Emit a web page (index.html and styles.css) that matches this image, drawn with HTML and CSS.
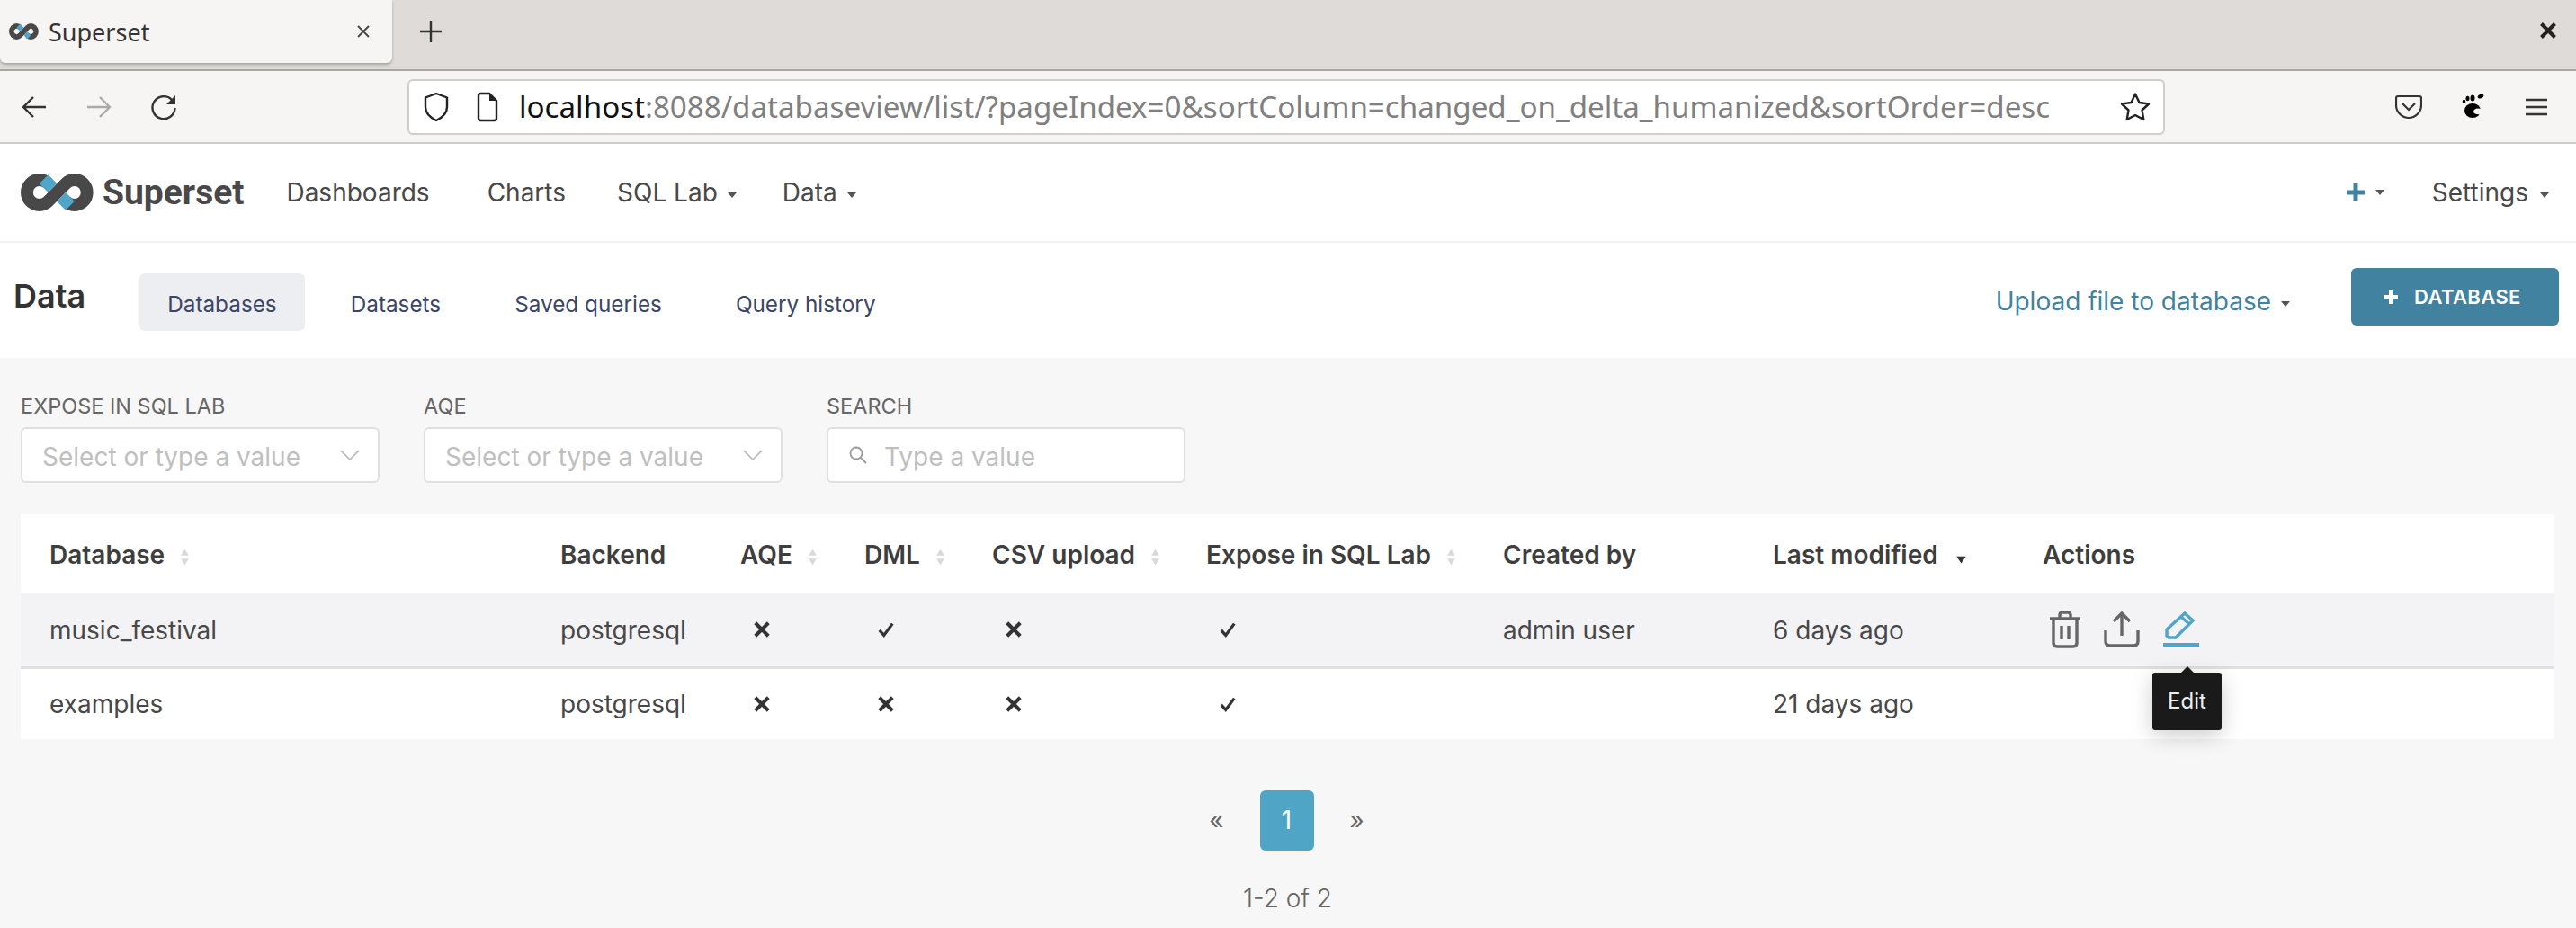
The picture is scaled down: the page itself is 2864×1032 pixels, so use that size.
FILE: index.html
```html
<!doctype html>
<html lang="en">
    <head>
        <meta charset="utf-8">
        <title>Superset</title>
        <link rel="stylesheet" href="styles.css">
    </head>
    <body>
        <svg class="defs" width="0" height="0">
            <symbol id="logo" viewBox="0 0 82 42" preserveAspectRatio="none">
                <path d="M30.900 11.100A14 14 0 1 0 30.900 30.900L50.700 11.100A14 14 0 1 1 50.700 30.900" fill="none" stroke="#484848" stroke-width="14"/>
                <path d="M26 6.200L35.850 16.050M45.750 25.950L55.600 35.800" fill="none" stroke="#4fa6c8" stroke-width="14"/>
            </symbol>
            <symbol id="yes" viewBox="0 0 22 22">
                <path d="M3 12L8.500 18L19 4" fill="none" stroke="#333" stroke-width="3.600"/>
            </symbol>
            <symbol id="no" viewBox="0 0 22 22">
                <path d="M3 3L19 19M19 3L3 19" fill="none" stroke="#333" stroke-width="4.400"/>
            </symbol>
            <symbol id="sort" viewBox="0 0 12 24">
                <path d="M6 2L11 10H1ZM6 22L1 14H11Z" fill="#d9d9d9"/>
            </symbol>
        </svg>

        <div class="tabbar">
            <div class="tab">
                <svg class="tab-logo"><use href="#logo"/></svg>
                <span class="tab-title">Superset</span>
                <svg class="tab-close" viewBox="0 0 16 16"><path d="M2 2L14 14M14 2L2 14" stroke="#444" stroke-width="1.8"/></svg>
            </div>
            <svg class="tab-new" viewBox="0 0 26 26"><path d="M13 1V25M1 13H25" stroke="#333" stroke-width="2.4"/></svg>
            <svg class="win-close" viewBox="0 0 16 16"><path d="M2 2L14 14M14 2L2 14" stroke="#222" stroke-width="3.2"/></svg>
        </div>

        <div class="toolbar">
            <svg class="tool-icon back" viewBox="0 0 30 30"><path d="M28 15H3M14 4L3 15L14 26" fill="none" stroke="#333" stroke-width="2.4"/></svg>
            <svg class="tool-icon forward" viewBox="0 0 30 30"><path d="M2 15H27M16 4L27 15L16 26" fill="none" stroke="#aaa" stroke-width="2.4"/></svg>
            <svg class="tool-icon reload" viewBox="0 0 30 30"><path d="M24 7A12.5 12.5 0 1 0 27.5 16" fill="none" stroke="#333" stroke-width="2.4"/><path d="M28 2V12H18Z" fill="#333"/></svg>
            <div class="urlbar">
                <svg class="shield" viewBox="0 0 30 34"><path d="M15 2L27 6.500V17C27 24 21 29 15 32C9 29 3 24 3 17V6.500Z" fill="none" stroke="#222" stroke-width="2.4" stroke-linejoin="round"/></svg>
                <svg class="doc" viewBox="0 0 26 34"><path d="M3 4.500Q3 2 5.500 2H15L23 10V29.500Q23 32 20.500 32H5.500Q3 32 3 29.500Z" fill="none" stroke="#222" stroke-width="2.400"/><path d="M15 2L23 10H15Z" fill="#222"/></svg>
                <span class="url"><span class="url-host">localhost</span>:8088/databaseview/list/?pageIndex=0&amp;sortColumn=changed_on_delta_humanized&amp;sortOrder=desc</span>
                <svg class="star" viewBox="0 0 34 34"><path d="M17 2.500L21.500 12L32 13.500L24.500 20.500L26.300 31L17 26L7.700 31L9.500 20.500L2 13.500L12.500 12Z" fill="none" stroke="#222" stroke-width="2.400" stroke-linejoin="round"/></svg>
            </div>
            <svg class="pocket" viewBox="0 0 30 28"><path d="M3 2H27Q29 2 29 4V12C29 20 22 26 15 26C8 26 1 20 1 12V4Q1 2 3 2Z" fill="none" stroke="#333" stroke-width="2.200"/><path d="M8 10L15 17L22 10" fill="none" stroke="#333" stroke-width="2.200"/></svg>
            <svg class="foot" viewBox="0 0 26 30">
                <ellipse cx="12" cy="19" rx="9" ry="8" fill="#000"/>
                <ellipse cx="2.500" cy="9" rx="1.800" ry="2.200" fill="#000"/>
                <ellipse cx="6.500" cy="5.500" rx="2" ry="2.800" fill="#000"/>
                <ellipse cx="12" cy="5" rx="2.500" ry="3.500" fill="#000"/>
                <ellipse cx="21" cy="3" rx="3.500" ry="2.200" fill="#000" transform="rotate(-25 21 3)"/>
                <path d="M22 17Q14 15 13 20Q14 24 22 23" fill="#f6f5f4"/>
            </svg>
            <svg class="menu" viewBox="0 0 26 22"><path d="M1 3H25M1 11H25M1 19H25" stroke="#333" stroke-width="2.400"/></svg>
        </div>

        <nav class="navbar">
            <svg class="brand-logo"><use href="#logo"/></svg>
            <span class="brand-name">Superset</span>
            <a class="nav-item nav-dash">Dashboards</a>
            <a class="nav-item nav-charts">Charts</a>
            <a class="nav-item nav-sql">SQL Lab<i class="caret"></i></a>
            <a class="nav-item nav-data">Data<i class="caret"></i></a>
            <span class="nav-right">
                <svg class="nav-plus" viewBox="0 0 22 22"><path d="M11 1V21M1 11H21" stroke="#40829f" stroke-width="5"/></svg>
                <i class="caret caret-plus"></i>
                <a class="nav-item nav-settings">Settings<i class="caret"></i></a>
            </span>
        </nav>

        <div class="subnav">
            <h1 class="subnav-title">Data</h1>
            <a class="subnav-tab active">Databases</a>
            <a class="subnav-tab">Datasets</a>
            <a class="subnav-tab">Saved queries</a>
            <a class="subnav-tab">Query history</a>
            <a class="upload">Upload file to database<i class="caret"></i></a>
            <a class="add-button"><svg viewBox="0 0 18 18"><path d="M9 1V17M1 9H17" stroke="#fff" stroke-width="4"/></svg>DATABASE</a>
        </div>

        <main class="content">
            <div class="filters">
                <div class="filter">
                    <label>EXPOSE IN SQL LAB</label>
                    <div class="select"><span>Select or type a value</span><svg viewBox="0 0 22 14"><path d="M1 2L11 12L21 2" fill="none" stroke="#bfbfbf" stroke-width="1.800"/></svg></div>
                </div>
                <div class="filter">
                    <label>AQE</label>
                    <div class="select"><span>Select or type a value</span><svg viewBox="0 0 22 14"><path d="M1 2L11 12L21 2" fill="none" stroke="#bfbfbf" stroke-width="1.800"/></svg></div>
                </div>
                <div class="filter">
                    <label>SEARCH</label>
                    <div class="select search"><svg viewBox="0 0 22 22"><circle cx="9" cy="9" r="6.500" fill="none" stroke="#999" stroke-width="1.800"/><path d="M14 14L20 20" stroke="#999" stroke-width="1.800"/></svg><span>Type a value</span></div>
                </div>
            </div>

            <table class="list">
                <colgroup>
                    <col class="c1"><col class="c2"><col class="c3"><col class="c4"><col class="c5"><col class="c6"><col class="c7"><col class="c8"><col>
                </colgroup>
                <tr>
                    <th>Database<svg class="sort sort-name"><use href="#sort"/></svg></th>
                    <th>Backend</th>
                    <th>AQE<svg class="sort"><use href="#sort"/></svg></th>
                    <th>DML<svg class="sort"><use href="#sort"/></svg></th>
                    <th>CSV upload<svg class="sort"><use href="#sort"/></svg></th>
                    <th>Expose in SQL Lab<svg class="sort"><use href="#sort"/></svg></th>
                    <th>Created by</th>
                    <th>Last modified<svg class="sort sort-active" viewBox="0 0 12 24"><path d="M6 20L0 11H12Z" fill="#333"/></svg></th>
                    <th>Actions</th>
                </tr>
                <tr class="hover">
                    <td>music_festival</td>
                    <td>postgresql</td>
                    <td><svg class="mark"><use href="#no"/></svg></td>
                    <td><svg class="mark"><use href="#yes"/></svg></td>
                    <td><svg class="mark"><use href="#no"/></svg></td>
                    <td><svg class="mark"><use href="#yes"/></svg></td>
                    <td>admin user</td>
                    <td>6 days ago</td>
                    <td class="actions">
                        <svg class="act-trash" viewBox="0 0 36 42"><path d="M1 9H35M12 9V5Q12 2 15 2H21Q24 2 24 5V9M5 9V36Q5 40 9 40H27Q31 40 31 36V9M14 17V32M22 17V32" fill="none" stroke="#666" stroke-width="3.400"/></svg>
                        <svg class="act-export" viewBox="0 0 40 40"><path d="M20 27V3M11 11L20 2L29 11M2 21V33Q2 38 7 38H33Q38 38 38 33V21" fill="none" stroke="#666" stroke-width="3.400"/></svg>
                        <svg class="act-edit" viewBox="0 0 40 42"><path d="M4 28V21L24 3L33 11L14 30H6ZM20 7L29 15" fill="none" stroke="#4fa6c8" stroke-width="3.400"/><path d="M0 38H40" stroke="#4fa6c8" stroke-width="4"/></svg>
                        <div class="tooltip">Edit</div>
                    </td>
                </tr>
                <tr>
                    <td>examples</td>
                    <td>postgresql</td>
                    <td><svg class="mark"><use href="#no"/></svg></td>
                    <td><svg class="mark"><use href="#no"/></svg></td>
                    <td><svg class="mark"><use href="#no"/></svg></td>
                    <td><svg class="mark"><use href="#yes"/></svg></td>
                    <td></td>
                    <td>21 days ago</td>
                    <td></td>
                </tr>
            </table>

            <div class="pager">
                <span class="pager-arrow">«</span>
                <span class="pager-current">1</span>
                <span class="pager-arrow">»</span>
            </div>
            <div class="pager-count">1-2 of 2</div>
        </main>
    </body>
</html>
```

FILE: styles.css
```css
html, body{margin:0;height:1032px;overflow:hidden;}
body{background:#f7f7f7;font:28px/1.2 Inter,"Liberation Sans",sans-serif;color:#484848;}
.defs{position:absolute;}
a{color:inherit;text-decoration:none;}
svg{display:block;flex:none;}

/* browser */
.tabbar{display:flex;align-items:flex-start;height:77px;background:#dedbd8;border-bottom:2px solid #a9a7a4;}
.tab{display:flex;align-items:center;box-sizing:border-box;width:436px;height:70px;padding:0 24px 0 10px;background:#f6f5f4;border-radius:0 0 6px 6px;box-shadow:0 2px 3px rgba(0,0,0,.25);}
.tab-logo{width:33px;height:18px;}
.tab-title{margin-left:11px;font:27px "Noto Sans",sans-serif;color:#333;}
.tab-close{width:16px;height:16px;margin-left:auto;}
.tab-new{width:26px;height:26px;margin:22px 0 0 30px;}
.win-close{width:20px;height:20px;margin:24px 21px 0 auto;}

.toolbar{display:flex;align-items:center;box-sizing:border-box;height:81px;background:#f6f5f4;border-bottom:2px solid #cfcdca;}
.tool-icon{width:30px;height:30px;}
.back{margin-left:23px;}
.forward{margin-left:42px;}
.reload{margin-left:42px;}
.urlbar{display:flex;align-items:center;box-sizing:border-box;width:1954px;height:62px;margin-left:256px;background:#fff;border:2px solid #d0cecb;border-radius:6px;}
.shield{width:30px;height:34px;margin-left:15px;}
.doc{width:26px;height:34px;margin-left:29px;}
.url{margin-left:22px;font:33.150px "Noto Sans",sans-serif;color:#808080;white-space:nowrap;}
.url-host{color:#111;}
.star{width:34px;height:34px;margin-left:auto;margin-right:14px;}
.pocket{width:30px;height:28px;margin-left:256px;}
.foot{width:26px;height:30px;margin-left:44px;}
.menu{width:26px;height:22px;margin-left:44px;}

/* superset nav */
.navbar{display:flex;align-items:center;box-sizing:border-box;height:110px;padding:0 30px 0 23px;background:#fff;border-bottom:2px solid #f3f3f3;}
.brand-logo{width:81px;height:42px;}
.brand-name{margin-left:10px;font:700 39px Roboto,sans-serif;color:#484848;}
.nav-item{padding-top:2px;white-space:nowrap;}
.nav-dash{margin-left:47px;}
.nav-charts{margin-left:64px;}
.nav-sql{margin-left:57px;}
.nav-data{margin-left:51px;}
.caret{display:inline-block;width:0;height:0;margin-left:11px;vertical-align:middle;border:5px solid transparent;border-top:6px solid #555;border-bottom:0;}
.nav-right{display:flex;align-items:center;margin-left:auto;}
.nav-plus{width:22px;height:22px;}
.caret-plus{margin-left:11px;}
.nav-settings{margin-left:53px;}
.nav-settings .caret{margin-left:13px;}

.subnav{display:flex;align-items:center;box-sizing:border-box;height:128px;padding:0 19px 0 15px;background:#fff;}
.subnav-title{margin:-8px 60px 0 0;font-size:36px;font-weight:600;color:#333;}
.subnav-tab{margin:4px 20px 0 0;padding:22px 31px 18px;font-size:24.300px;color:#3c4668;border-radius:6px;line-height:24px;}
.subnav-tab.active{background:#eceef2;}
.upload{margin:4px 0 0 auto;font-size:28px;color:#40829f;}
.add-button{display:flex;align-items:center;box-sizing:border-box;width:231px;height:64px;margin:-8px 0 0 68px;padding-left:35px;background:#40829f;border-radius:6px;font-size:22px;font-weight:600;letter-spacing:.4px;color:#fff;}
.add-button svg{width:18px;height:18px;margin-right:17px;}
.upload .caret{border-top-color:#555;}

/* list */
.content{padding:0 24px 0 23px;}
.filters{display:flex;gap:49px;padding-top:38px;}
.filter label{display:block;height:39px;padding-top:2px;box-sizing:border-box;font-size:23.500px;line-height:28px;color:#666;}
.select{display:flex;align-items:center;box-sizing:border-box;width:399px;height:62px;padding:0 20px 0 22px;background:#fff;border:2px solid #e0e0e0;border-radius:6px;color:#bfbfbf;}
.select span{margin-top:6px;}
.select svg{width:22px;height:14px;margin-left:auto;}
.search svg{width:22px;height:22px;margin:0 18px 0 0;}

.list{width:100%;margin-top:35px;border-collapse:collapse;table-layout:fixed;background:#fff;}
.c1{width:568px;}
.c2{width:200px;}
.c3{width:138px;}
.c4{width:142px;}
.c5{width:238px;}
.c6{width:330px;}
.c7{width:300px;}
.c8{width:300px;}
.list th{box-sizing:border-box;height:88px;padding:3px 0 0 32px;text-align:left;font-weight:600;white-space:nowrap;color:#3e3e3e;}
.list td{box-sizing:border-box;height:80px;padding:3px 0 0 32px;color:#484848;}
.list .hover td{height:82px;background:#f3f3f6;border-bottom:3px solid #e0e0e0;}
.sort{display:inline-block;width:11px;height:21px;margin-left:17px;vertical-align:middle;}
.sort-name{margin-left:17px;}
.sort-active{margin-left:20px;}
.mark{width:20px;height:20px;margin:-3px 0 0 14px;}
.actions{position:relative;}
.actions svg{display:inline-block;vertical-align:middle;}
.act-trash{width:36px;height:42px;margin:-4px 17px 0 7px;}
.act-export{width:40px;height:40px;margin:-4px 18px 0 0;}
.act-edit{width:40px;height:42px;margin-top:-4px;}
.tooltip{position:absolute;top:88px;left:154px;width:77px;height:64px;background:#1a1a1a;border-radius:3px;box-shadow:0 6px 24px rgba(0,0,0,.2);font-size:24px;line-height:64px;text-align:center;color:#eee;}
.tooltip:before{content:"";position:absolute;top:-7px;left:32px;border:7px solid transparent;border-top:0;border-bottom-color:#1a1a1a;}

.pager{display:flex;align-items:center;justify-content:center;gap:30px;margin-top:57px;padding-right:2px;}
.pager-arrow{width:30px;text-align:center;color:#666;}
.pager-current{width:60px;height:67px;line-height:67px;text-align:center;background:#4fa5c6;border-radius:6px;color:#fff;}
.pager-arrow:first-child{margin-right:3px;}
.pager-arrow:last-child{margin-left:3px;}
.pager-count{margin-top:37px;text-align:center;font-weight:300;color:#666;}
```
